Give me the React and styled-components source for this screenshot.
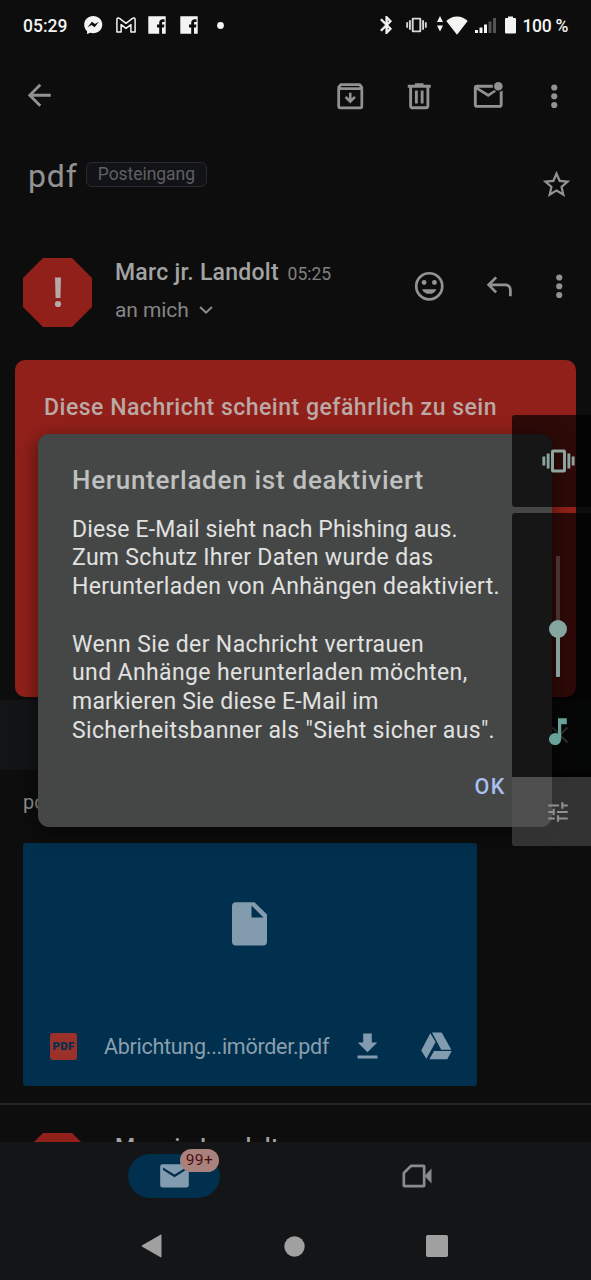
import React from "react";
import styled, { createGlobalStyle } from "styled-components";

const GlobalStyle = createGlobalStyle`
  * { box-sizing: border-box; }
  body { margin: 0; background: #0d0d0d; }
`;

const Screen = styled.div`
  position: relative;
  width: 591px;
  height: 1280px;
  overflow: hidden;
  display: flex;
  flex-direction: column;
  background: #0d0d0d;
  font-family: Roboto, "Liberation Sans", sans-serif;
  color: #929292;
`;

const Label = styled.span`
  font-size: ${(p) => p.$size}px;
  font-weight: ${(p) => p.$weight || 400};
  line-height: ${(p) => p.$line || 30}px;
  letter-spacing: ${(p) => p.$track || 0}px;
  color: ${(p) => p.$color || "inherit"};
  white-space: pre;
`;

const Svg = styled.svg`
  display: block;
  flex: none;
  fill: ${(p) => p.$color || "currentColor"};
  margin-left: ${(p) => p.$gap || 0}px;
`;

const Icon = ({ w = 34.5, h = w, box = "0 0 24 24", color, gap, children }) => (
  <Svg width={w} height={h} viewBox={box} $color={color} $gap={gap}>
    {children}
  </Svg>
);

/* status bar */
const StatusBar = styled.header`
  height: 50px;
  padding: 0 23px;
  display: flex;
  align-items: center;
  color: #f4f4f2;
  flex: none;
`;
const StatusText = styled(Label)`
  padding-top: 2px;
  margin-left: ${(p) => p.$gap || 0}px;
`;
const Spacer = styled.div`
  flex: 1;
`;

const FacebookIcon = ({ gap }) => (
  <Icon w={18} box="0 0 18 18" gap={gap}>
    <path d="M.3.3h17.4v17.4h-3.700v-6.200h2l.4-2.900h-2.400V7.400c0-.9.3-1.400 1.400-1.400h1.100V3.300c-.3 0-1-.1-1.800-.1-2.100 0-3.500 1.200-3.500 3.500v1.900H9v2.900h2.200v6.200H.3z" />
  </Icon>
);

const VibrateGlyph = () => (
  <>
    <path
      fillRule="evenodd"
      d="M11 .6h11a2 2 0 0 1 2 2v18.800a2 2 0 0 1-2 2H11a2 2 0 0 1-2-2V2.600a2 2 0 0 1 2-2zM12 3.500v17h9v-17z"
    />
    <path d="M4.700 4.600h2.900v14.800H4.700zM.4 7.500h2.900v9H.4zM25.400 4.600h2.900v14.800h-2.900zM29.700 7.500h2.900v9h-2.900z" />
  </>
);

/* toolbar */
const Toolbar = styled.div`
  height: 90px;
  padding: 0 20px 0 22px;
  display: flex;
  align-items: center;
  justify-content: space-between;
  flex: none;
`;
const ToolbarActions = styled.div`
  display: flex;
  padding-top: 2px;
`;

const MoreIcon = ({ gap }) => (
  <Icon gap={gap}>
    <circle cx="12" cy="5.900" r="2.150" />
    <circle cx="12" cy="12" r="2.150" />
    <circle cx="12" cy="18.100" r="2.150" />
  </Icon>
);

/* subject */
const SubjectRow = styled.div`
  height: 100px;
  padding: 19px 18px 0 28px;
  display: flex;
  align-items: flex-start;
  flex: none;
`;
const FolderChip = styled.div`
  width: 121px;
  height: 25px;
  margin: 3px 0 0 8px;
  padding-bottom: 1px;
  border: 1px solid #292b2e;
  border-radius: 6px;
  background: #121316;
  display: flex;
  justify-content: center;
  align-items: center;
`;
const StarSlot = styled.div`
  margin: 9px 0 0 auto;
`;

/* message header */
const Header = styled.div`
  height: 120px;
  padding: 18px 14.5px 0 23px;
  display: flex;
  align-items: flex-start;
  flex: none;
`;
const Octagon = styled.div`
  width: 69px;
  height: 69px;
  flex: none;
  background: #91201a;
  clip-path: polygon(29% 0, 71% 0, 100% 29%, 100% 71%, 71% 100%, 29% 100%, 0 71%, 0 29%);
  display: grid;
  place-items: center;
`;
const SenderInfo = styled.div`
  margin-left: 23px;
  display: flex;
  flex-direction: column;
  gap: 7px;
`;
const Line = styled.div`
  display: flex;
  align-items: baseline;
  height: 30px;
`;
const Recipient = styled(Line)`
  align-items: center;
`;
const HeaderActions = styled.div`
  margin: 11px 0 0 auto;
  display: flex;
`;

const Content = styled.main`
  height: 1092px;
  flex: none;
  overflow: hidden;
  display: flex;
  flex-direction: column;
`;
const Banner = styled.section`
  height: 337px;
  margin: 0 15px;
  padding: 33px 29px;
  border-radius: 10px;
  background: #91201a;
  flex: none;
`;
const NoticeBand = styled.div`
  height: 70px;
  margin-top: 3px;
  padding-right: 20px;
  background: #131416;
  display: flex;
  align-items: center;
  justify-content: flex-end;
  flex: none;
`;
const MessageBody = styled.div`
  height: 73px;
  padding: 17px 23px 0;
  flex: none;
`;
const Attachment = styled.section`
  width: 454px;
  height: 243px;
  margin-left: 23px;
  border-radius: 3px;
  background: #00304e;
  color: #829bae;
  display: flex;
  flex-direction: column;
  flex: none;
`;
const Preview = styled.div`
  height: 163px;
  padding: 0 1px 1px 0;
  display: grid;
  place-items: center;
`;
const FileRow = styled.div`
  height: 80px;
  padding: 0 25px 0 27px;
  display: flex;
  align-items: center;
`;
const FileName = styled(Label)`
  padding-top: 1px;
`;
const PdfBadge = styled.div`
  width: 27px;
  height: 27px;
  margin-right: 27px;
  border-radius: 3px;
  background: #9c302b;
  display: grid;
  place-items: center;
`;
const Divider = styled.div`
  height: 2px;
  margin: 17px 0 10px;
  background: #252627;
  flex: none;
`;

/* bottom bars */
const BottomTabs = styled.nav`
  height: 70px;
  background: #141516;
  padding: 0 159px 3px 128px;
  display: flex;
  justify-content: space-between;
  align-items: center;
  flex: none;
`;
const MailTab = styled.div`
  position: relative;
  width: 92px;
  height: 44px;
  border-radius: 22px;
  background: #00304e;
  display: grid;
  place-items: center;
`;
const Count = styled.div`
  position: absolute;
  top: -5px;
  right: 1px;
  width: 39px;
  height: 23px;
  border-radius: 12px;
  background: #a9817d;
  display: grid;
  place-items: center;
`;
const SystemNav = styled.nav`
  flex: 1;
  background: #141516;
  color: #a0a0a0;
  padding: 0 143px 0 141px;
  display: flex;
  justify-content: space-between;
  align-items: center;
`;

/* overlays */
const Dialog = styled.div`
  position: absolute;
  left: 38px;
  top: 434px;
  width: 514px;
  height: 393px;
  padding: 31px 34px;
  border-radius: 11px;
  background: #454746;
  box-shadow: 0 6px 18px 3px rgba(0, 0, 0, 0.4);
  display: flex;
  flex-direction: column;
`;
const DialogText = styled.p`
  margin: 20.5px 0 0;
  display: flex;
  flex-direction: column;
  height: 230px;
`;
const DialogLine = styled(Label)`
  font-size: 23px;
  line-height: 28.75px;
  min-height: 28.75px;
  color: #e0e1e0;
`;
const DialogActions = styled.div`
  margin-top: 26px;
  padding-right: 12px;
  display: flex;
  justify-content: flex-end;
`;
const VolumePanel = styled.aside`
  position: absolute;
  left: 512px;
  top: 415px;
  width: 92px;
  display: flex;
  flex-direction: column;
`;
const VolumeMode = styled.div`
  height: 92px;
  margin-bottom: 6px;
  border-radius: 3px;
  background: rgba(0, 0, 0, 0.69);
  color: #8da39e;
  display: grid;
  place-items: center;
`;
const VolumeSlider = styled.div`
  height: 264px;
  padding: 43px 0 0;
  border-radius: 3px 3px 0 0;
  background: rgba(0, 0, 0, 0.69);
  display: flex;
  flex-direction: column;
  align-items: center;
`;
const Track = styled.div`
  width: 4px;
  height: 121px;
  margin-bottom: 41px;
  border-radius: 1px;
  background: linear-gradient(rgba(130, 130, 130, 0.35) 60%, #84a19b 60%);
  display: flex;
  justify-content: center;
`;
const Knob = styled.div`
  width: 18px;
  height: 18px;
  margin-top: 64px;
  flex: none;
  border-radius: 50%;
  background: #85a59f;
`;
const VolumeSettings = styled.div`
  height: 69px;
  border-radius: 0 0 0 3px;
  background: rgba(83, 83, 83, 0.55);
  color: #8f9090;
  display: grid;
  place-items: center;
`;

const MessageHeader = () => (
  <Header>
    <Octagon>
      <Icon w={8} h={31} box="0 0 8 31" color="#b5aaa7">
        <path d="M1 .5h6l-.6 20.500H1.600z" />
        <circle cx="4" cy="27" r="3.100" />
      </Icon>
    </Octagon>
    <SenderInfo>
      <Line>
        <Label $size={23} $weight={500} $track={0.26} $color="#a3a3a3">Marc jr. Landolt</Label>
        <Label $size={17.5} $color="#808080">{"  05:25"}</Label>
      </Line>
      <Recipient>
        <Label $size={21} $track={-0.1} $color="#858585">an mich</Label>
        <Icon w={14} h={8} box="0 0 14 8" gap={10} color="#8c8c8c">
          <path d="M1.800.3 7 5.300 12.200.3l1.400 1.400L7 8 .4 1.700z" />
        </Icon>
      </Recipient>
    </SenderInfo>
    <HeaderActions>
      <Icon>
        <path
          fillRule="evenodd"
          d="M12 2a10 10 0 1 0 0 20 10 10 0 0 0 0-20zm0 18.100a8.100 8.100 0 1 1 0-16.200 8.100 8.100 0 0 1 0 16.200z"
        />
        <circle cx="8.400" cy="9.400" r="1.700" />
        <circle cx="15.600" cy="9.400" r="1.700" />
        <path d="M7 14h10c-.8 2-2.700 3.300-5 3.300S7.800 16 7 14z" />
      </Icon>
      <Icon gap={35}>
        <path d="M9.200 5.200 10.500 6.500 6.900 10.100H16.200C19 10.100 20.700 11.900 20.700 14.700V19H18.800V14.900C18.800 13 17.900 12 16 12H6.900L10.500 15.600 9.200 16.900 3.300 11z" />
      </Icon>
      <MoreIcon gap={26} />
    </HeaderActions>
  </Header>
);

export default function App() {
  return (
    <>
      <GlobalStyle />
      <Screen>
        <StatusBar>
          <StatusText $size={17.5} $weight={500} $line={20}>05:29</StatusText>
          <Icon w={18.5} box="0 0 18.500 18.500" gap={17}>
            <path
              fillRule="evenodd"
              d="M9.250 0C4.100 0 .2 3.800.2 8.700c0 2.600 1.100 4.900 2.900 6.500v3l2.900-1.500c1 .3 2.100.5 3.250.5 5.150 0 9.050-3.700 9.050-8.600S14.400 0 9.250 0zM3.600 11.200l4.300-5.400 3 2.300 4-2.300-4.300 5.400-3-2.300z"
            />
          </Icon>
          <Icon w={20} h={16} box="0 0 20 16" gap={13}>
            <path
              fill="none"
              stroke="currentColor"
              strokeWidth="1.500"
              strokeLinejoin="round"
              d="M.9 15V2.400C.9 1 2.500.6 3.500 1.400L10 6.300l6.500-4.900c1-.8 2.600-.4 2.600 1V15h-4.200V7.600L10 11.300 5.100 7.600V15z"
            />
          </Icon>
          <FacebookIcon gap={12.5} />
          <FacebookIcon gap={14} />
          <Icon w={7} box="0 0 7 7" gap={19}>
            <circle cx="3.500" cy="3.500" r="3.400" />
          </Icon>
          <Spacer />
          <Icon w={12} h={18} box="4.500 2 13.500 20">
            <path
              stroke="currentColor"
              strokeWidth=".7"
              d="M17.710 7.710L12 2h-1v7.590L6.410 5 5 6.410 10.590 12 5 17.590 6.410 19 11 14.410V22h1l5.710-5.710-4.300-4.290 4.300-4.290zM13 5.830l1.880 1.880L13 9.590V5.830zm1.880 10.460L13 18.170v-3.760l1.880 1.880z"
            />
          </Icon>
          <Icon w={21} h={16} box="0 0 33 24" gap={13.5} color="#d8d8d6">
            <VibrateGlyph />
          </Icon>
          <Icon w={6} h={20} box="0 0 6 20" gap={10}>
            <path d="M3 1l3 6H0zM3 16.500l3-6H0z" />
          </Icon>
          <Icon w={22} h={19} box="0 0 22 19" gap={3.5}>
            <path d="M11 18.700.3 5.100C3 2 6.800.4 11 .4S19 2 21.700 5.100z" />
          </Icon>
          <Icon w={21} h={15} box="0 0 21 15" gap={6.5}>
            <path d="M0 12h3v3H0zM4.500 9.500h3V15h-3zM9 6.500h3V15H9z" />
            <path opacity=".3" d="M13.500 3.500h3V15h-3zM18 0h3v15h-3z" />
          </Icon>
          <Icon w={11} h={18} box="0 0 11 18" gap={9}>
            <path d="M3 .5h5V2h2q1 0 1 1v13.500q0 1-1 1H1q-1 0-1-1V3q0-1 1-1h2z" />
          </Icon>
          <StatusText $size={17.5} $weight={500} $line={20} $track={-0.3} $gap={6.5}>100 %</StatusText>
        </StatusBar>

        <Content>
          <Toolbar>
            <Icon>
              <path d="M20 11H7.800l5.600-5.600L12 4l-8 8 8 8 1.400-1.400L7.800 13H20z" />
            </Icon>
            <ToolbarActions>
              <Icon>
                <path
                  fillRule="evenodd"
                  d="M5.600 3h12.800c.5 0 .9.2 1.200.6l1 1.300c.3.300.4.700.4 1.100V19a2 2 0 0 1-2 2H5a2 2 0 0 1-2-2V6c0-.4.100-.8.4-1.100l1-1.300c.3-.4.700-.6 1.200-.6zM5.300 5.800h13.400l-.7-.9H6zM4.900 7.700v11.400h14.200V7.700z"
                />
                <path d="M11.100 9.500h1.800v4l1.700-1.700 1.300 1.300-3.900 3.900-3.900-3.900 1.300-1.300 1.700 1.700z" />
              </Icon>
              <Icon gap={34.5}>
                <path
                  fillRule="evenodd"
                  d="M9 3h6v1h5v2h-1v13c0 1.100-.9 2-2 2H7c-1.100 0-2-.9-2-2V6H4V4h5zM7 6v13h10V6zM9 8h2v9H9zM13 8h2v9h-2z"
                />
              </Icon>
              <Icon gap={34.5}>
                <path d="M15.200 4a4 4 0 0 0 .1 2H5.200L12 10.300l4.300-2.700c.4.500.9.800 1.400 1L12 12.500 4 7.500V18h16V8.900a4 4 0 0 0 2-1V18c0 1.100-.9 2-2 2H4c-1.100 0-2-.9-2-2V6c0-1.100.9-2 2-2z" />
                <circle cx="19" cy="5" r="3" />
              </Icon>
              <MoreIcon gap={31.5} />
            </ToolbarActions>
          </Toolbar>

          <SubjectRow>
            <Label $size={32} $line={34} $track={0.9} $color="#929292">pdf</Label>
            <FolderChip>
              <Label $size={17.5} $line={22} $track={-0.05} $color="#5e6064">Posteingang</Label>
            </FolderChip>
            <StarSlot>
              <Icon w={33}>
                <path
                  fillRule="evenodd"
                  d="M22 9.240l-7.190-.62L12 2 9.190 8.630 2 9.240l5.460 4.730L5.820 21 12 17.270 18.180 21l-1.630-7.030zM12 15.400l-3.760 2.270 1-4.280-3.320-2.880 4.380-.38L12 6.100l1.710 4.040 4.380.38-3.320 2.880 1 4.280z"
                />
              </Icon>
            </StarSlot>
          </SubjectRow>

          <MessageHeader />

          <Banner>
            <Label $size={23} $weight={500} $track={0.51} $color="#baa9a4">Diese Nachricht scheint gefährlich zu sein</Label>
          </Banner>
          <NoticeBand>
            <Icon w={22} box="0 0 22 22">
              <path d="M4.200 2.800 11 9.600l6.800-6.800 1.400 1.400L12.400 11l6.800 6.800-1.400 1.400L11 12.400l-6.800 6.800-1.400-1.400L9.600 11 2.800 4.200z" />
            </Icon>
          </NoticeBand>
          <MessageBody>
            <Label $size={20} $color="#929292">pdf</Label>
          </MessageBody>

          <Attachment>
            <Preview>
              <Icon w={35} h={44} box="0 0 35 44">
                <path
                  fillRule="evenodd"
                  d="M4 .3h18.500L35 12.500V39.500a4 4 0 0 1-4 4H4a4 4 0 0 1-4-4V4.300a4 4 0 0 1 4-4zM19.500 3.500v12h12z"
                />
              </Icon>
            </Preview>
            <FileRow>
              <PdfBadge>
                <Label $size={11.5} $weight={900} $line={14} $track={0.2} $color="#00304e">PDF</Label>
              </PdfBadge>
              <FileName $size={21.5} $track={-0.28} $color="#8a9eae">Abrichtung...imörder.pdf</FileName>
              <Spacer />
              <Icon w={21} h={26} box="0 0 21 26">
                <path d="M6.200.5h8.600v9h5.500l-9.800 9.700L.7 9.500h5.500zM.5 22.400h20v3.100H.5z" />
              </Icon>
              <Icon w={31} h={28} box="0 0 31 28" gap={43}>
                <path d="M9.300 1.300 14.600 10 5.400 26.700.2 18.600zM11 .5h9.700l9.600 17.200H20.200zM13 19h17.700l-4.400 8.300H8.300z" />
              </Icon>
            </FileRow>
          </Attachment>
          <Divider />
          <MessageHeader />
        </Content>

        <BottomTabs>
          <MailTab>
            <Icon w={29} h={24} box="0 0 29 24" color="#829bae">
              <path
                fillRule="evenodd"
                d="M2.500.3h24a2.300 2.300 0 0 1 2.300 2.300v18.600a2.300 2.300 0 0 1-2.300 2.300h-24a2.300 2.300 0 0 1-2.300-2.300V2.600A2.300 2.300 0 0 1 2.500.3zM3 3.500v2.600l11.500 7.200L26 6.100V3.500L14.500 10.600z"
              />
            </Icon>
            <Count>
              <Label $size={15.5} $line={18} $track={0.5} $color="#4a0f0c">99+</Label>
            </Count>
          </MailTab>
          <Icon w={30} h={24} box="0 0 30 24" color="#8a8b8c">
            <path
              fillRule="evenodd"
              d="M8.500.5h13a2 2 0 0 1 2 2v19a2 2 0 0 1-2 2h-19a2 2 0 0 1-2-2V8.500zM9.600 3.200 3.200 9.600v11.200h17.600V3.200z"
            />
            <path d="M22.500 12 29.500 4.500v15z" />
          </Icon>
        </BottomTabs>
        <SystemNav>
          <Icon w={21} h={24} box="0 0 21 24">
            <path d="M19.500.7Q20.500.2 20.500 1.500v21q0 1.300-1 .8L1.200 12.800q-1.200-.8 0-1.600z" />
          </Icon>
          <Icon w={21} box="0 0 21 21" gap={1.5}>
            <circle cx="10.500" cy="10.500" r="10.200" />
          </Icon>
          <Icon w={22} box="0 0 22 22">
            <rect width="22" height="22" rx="1.800" />
          </Icon>
        </SystemNav>

        <Dialog>
          <Label $size={26} $weight={500} $track={0.72} $color="#bfc0bf">Herunterladen ist deaktiviert</Label>
          <DialogText>
            <DialogLine $track={0.15}>Diese E-Mail sieht nach Phishing aus.</DialogLine>
            <DialogLine $track={0.31}>Zum Schutz Ihrer Daten wurde das</DialogLine>
            <DialogLine $track={0.31}>Herunterladen von Anhängen deaktiviert.</DialogLine>
            <DialogLine />
            <DialogLine $track={0.36}>Wenn Sie der Nachricht vertrauen</DialogLine>
            <DialogLine $track={0.38}>und Anhänge herunterladen möchten,</DialogLine>
            <DialogLine $track={0.21}>markieren Sie diese E-Mail im</DialogLine>
            <DialogLine $track={0.34}>Sicherheitsbanner als "Sieht sicher aus".</DialogLine>
          </DialogText>
          <DialogActions>
            <Label $size={21.5} $weight={500} $track={1.6} $color="#a8bff0">OK</Label>
          </DialogActions>
        </Dialog>

        <VolumePanel>
          <VolumeMode>
            <Icon w={33} h={24} box="0 0 33 24">
              <VibrateGlyph />
            </Icon>
          </VolumeMode>
          <VolumeSlider>
            <Track>
              <Knob />
            </Track>
            <Icon w={18} h={27} box="0 0 18 27" color="#68a199">
              <path d="M9 .3h8.800v6H12.200v14.800A6.100 6.100 0 1 1 9 15.700z" />
            </Icon>
          </VolumeSlider>
          <VolumeSettings>
            <Icon w={26}>
              <path d="M3 17v2h6v-2zM3 5v2h10V5zM13 21v-2h8v-2h-8v-2h-2v6zM7 9v2H3v2h4v2h2V9zM21 13v-2H11v2zM15 9h2V7h4V5h-4V3h-2z" />
            </Icon>
          </VolumeSettings>
        </VolumePanel>
      </Screen>
    </>
  );
}
